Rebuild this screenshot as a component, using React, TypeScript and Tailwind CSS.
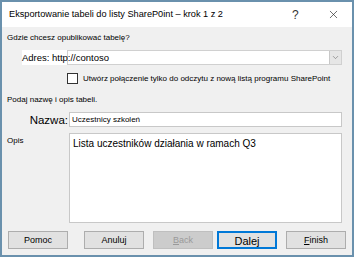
import { X, ChevronDown } from 'lucide-react';

const font = { fontFamily: '"Liberation Sans", Arial, sans-serif' };

function Btn({ label, u, variant = 'normal' }: { label: string; u?: boolean; variant?: 'normal' | 'disabled' | 'default' }) {
  const base = 'w-[60px] h-[18px] flex items-center justify-center leading-none';
  const cls =
    variant === 'disabled'
      ? 'bg-[#cccccc] border border-[#bfbfbf] text-[#9a9a9a] text-[9px]'
      : variant === 'default'
      ? 'bg-[#e1e1e1] border-2 border-[#0078d7] text-black text-[11px] pt-[3px]'
      : 'bg-[#e1e1e1] border border-[#adadad] text-black text-[9px]';
  return (
    <div className={`${base} ${cls}`}>
      {u ? (
        <span>
          <span className="underline">{label[0]}</span>
          {label.slice(1)}
        </span>
      ) : (
        label
      )}
    </div>
  );
}

export default function App() {
  return (
    <div className="w-[354px] h-[257px] border-2 border-[#6a91ad] bg-[#f0f0f0] flex flex-col" style={font}>
      {/* Title bar */}
      <div className="h-[25px] bg-white flex items-center pl-[7px] shrink-0">
        <span className="w-[283px] text-[9.2px] text-black whitespace-nowrap overflow-hidden">
          Eksportowanie tabeli do listy ShareP0int – krok 1 z 2
        </span>
        <span className="w-[35px] text-[12px] text-[#333]">?</span>
        <X className="w-[13px] h-[13px] text-[#222]" strokeWidth={1.2} />
      </div>

      <div className="flex-1 flex flex-col px-[5px]">
        <div className="text-[8px] text-black mt-[5px] h-[11px] leading-[11px] whitespace-nowrap">Gdzie chcesz opublikować tabelę?</div>

        {/* Address */}
        <div className="flex mt-[7px] ml-[15px] mr-[5px] h-[15px] bg-white">
          <span className="text-[9.5px] leading-[15px] w-[45px] whitespace-nowrap">Adres:</span>
          <div className="flex-1 flex border border-[#d0d0d0]">
            <span className="flex-1 text-[9.5px] leading-[13px] -ml-[16px] whitespace-nowrap">http://contoso</span>
            <div className="w-[12px] bg-[#e6e6e6] border-l border-[#c8c8c8] flex items-center justify-center">
              <ChevronDown className="w-[9px] h-[9px] text-[#666]" strokeWidth={1.5} />
            </div>
          </div>
        </div>

        {/* Checkbox */}
        <div className="flex items-center ml-[60px] mt-[8px] h-[11px]">
          <div className="w-[11px] h-[11px] bg-white border border-[#333]" />
          <span className="ml-[5px] text-[8px] whitespace-nowrap">Utwórz połączenie tylko do odczytu z nową listą programu SharePoint</span>
        </div>

        <div className="text-[8px] mt-[10px] h-[11px] leading-[11px] whitespace-nowrap">Podaj nazwę i opis tabeli.</div>

        {/* Name */}
        <div className="flex items-end mt-[7px] mr-[5px] h-[15px]">
          <span className="w-[62px] text-right text-[11.5px] leading-[14px] pr-[1px]">Nazwa:</span>
          <div className="flex-1 h-[15px] bg-white border border-[#c8c8c8] text-[8px] leading-[13px] pl-[2px] whitespace-nowrap">Uczestnicy szkoleń</div>
        </div>

        {/* Description */}
        <div className="flex mt-[6px] mr-[5px]">
          <span className="w-[62px] text-[8px] mt-[2px]">Opis</span>
          <div className="flex-1 h-[90px] bg-white border border-[#c8c8c8] text-[10px] pl-[3px] pt-[2px] whitespace-nowrap">Lista uczestników działania w ramach Q3</div>
        </div>

        {/* Buttons */}
        <div className="flex mt-[8px] ml-[1px]">
          <Btn label="Pomoc" />
          <div className="ml-[16px]"><Btn label="Anuluj" /></div>
          <div className="ml-[9px]"><Btn label="Back" u variant="disabled" /></div>
          <div className="ml-[4px]"><Btn label="Dalej" variant="default" /></div>
          <div className="ml-[9px]"><Btn label="Finish" u /></div>
        </div>
      </div>
    </div>
  );
}
